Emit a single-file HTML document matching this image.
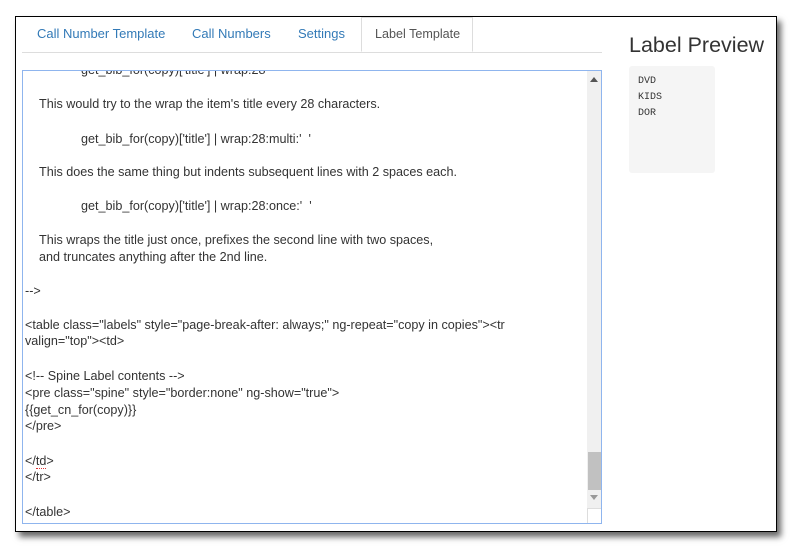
<!DOCTYPE html>
<html><head><style>
body{margin:0;width:793px;height:549px;background:#fff;position:relative;overflow:hidden;font-family:"Liberation Sans",Arial,sans-serif;}
.win{position:absolute;left:15px;top:16px;width:760px;height:514px;border:1px solid #000;background:#fff;box-shadow:4px 5px 6px rgba(0,0,0,.6);overflow:hidden}
.tabs{position:absolute;left:22px;top:17px;width:580px;height:35px;border-bottom:1px solid #ddd}
.tab{position:absolute;top:0;height:35px;line-height:33px;font-size:13px;color:#337ab7}
.tab.act{border:1px solid #ddd;border-bottom:1px solid #fff;background:#fff;color:#555;height:35px;box-sizing:border-box;padding:0 12px 0 13px;font-size:12.6px}
.ta{position:absolute;left:22px;top:70px;width:578px;height:452px;border:1px solid #8fb5ee;overflow:hidden;background:#fff}
.l{position:absolute;font-size:12.6px;color:#333;white-space:pre;line-height:17px}
.sb{position:absolute;left:564px;top:0;width:14px;height:452px;background:#f0f0f0}
.thumb{position:absolute;left:1px;top:381px;width:13px;height:38px;background:#c1c1c1}
.prev{position:absolute;left:629px;top:66px;width:86px;height:107px;background:#f5f5f5;border-radius:3px;font-family:"Liberation Mono",monospace;font-size:10px;line-height:16px;color:#333;padding:8px 0 0 9px;box-sizing:border-box}
</style></head><body>
<div class="win"></div>
<div class="tabs">
<div class="tab" style="left:15px">Call Number Template</div>
<div class="tab" style="left:170px">Call Numbers</div>
<div class="tab" style="left:276px">Settings</div>
<div class="tab act" style="left:339px;top:0">Label Template</div>
</div>
<div class="ta">
<div class="l" style="left:58px;top:-9px">get_bib_for(copy)['title'] | wrap:28</div>
<div class="l" style="left:16px;top:25px">This would try to the wrap the item's title every 28 characters.</div>
<div class="l" style="left:58px;top:60px">get_bib_for(copy)['title'] | wrap:28:multi:'  '</div>
<div class="l" style="left:16px;top:93px">This does the same thing but indents subsequent lines with 2 spaces each.</div>
<div class="l" style="left:58px;top:127px">get_bib_for(copy)['title'] | wrap:28:once:'  '</div>
<div class="l" style="left:16px;top:161px">This wraps the title just once, prefixes the second line with two spaces,</div>
<div class="l" style="left:16px;top:178px">and truncates anything after the 2nd line.</div>
<div class="l" style="left:2px;top:212px">--&gt;</div>
<div class="l" style="left:2px;top:246px">&lt;table class="labels" style="page-break-after: always;" ng-repeat="copy in copies"&gt;&lt;tr</div>
<div class="l" style="left:2px;top:262px">valign="top"&gt;&lt;td&gt;</div>
<div class="l" style="left:2px;top:297px">&lt;!-- Spine Label contents --&gt;</div>
<div class="l" style="left:2px;top:314px">&lt;pre class="spine" style="border:none" ng-show="true"&gt;</div>
<div class="l" style="left:2px;top:331px">{{get_cn_for(copy)}}</div>
<div class="l" style="left:2px;top:347px">&lt;/pre&gt;</div>
<div class="l" style="left:2px;top:382px">&lt;/<span style="border-bottom:1px dotted #d33">td</span>&gt;</div>
<div class="l" style="left:2px;top:398px">&lt;/tr&gt;</div>
<div class="l" style="left:2px;top:433px">&lt;/table&gt;</div>
<div class="sb"><div style="position:absolute;left:3px;top:6px;border:4px solid transparent;border-bottom:5px solid #555;border-top:0"></div><div class="thumb"></div><div style="position:absolute;left:3px;top:424px;border:4px solid transparent;border-top:5px solid #999;border-bottom:0"></div></div>
<div style="position:absolute;left:564px;top:437px;width:14px;height:15px;background:#fff;border-left:1px solid #ddd;border-top:1px solid #ddd"></div>
</div>
<div style="position:absolute;left:629px;top:33px;font-size:21.5px;color:#333">Label Preview</div>
<div class="prev">DVD<br>KIDS<br>DOR</div>
</body></html>
